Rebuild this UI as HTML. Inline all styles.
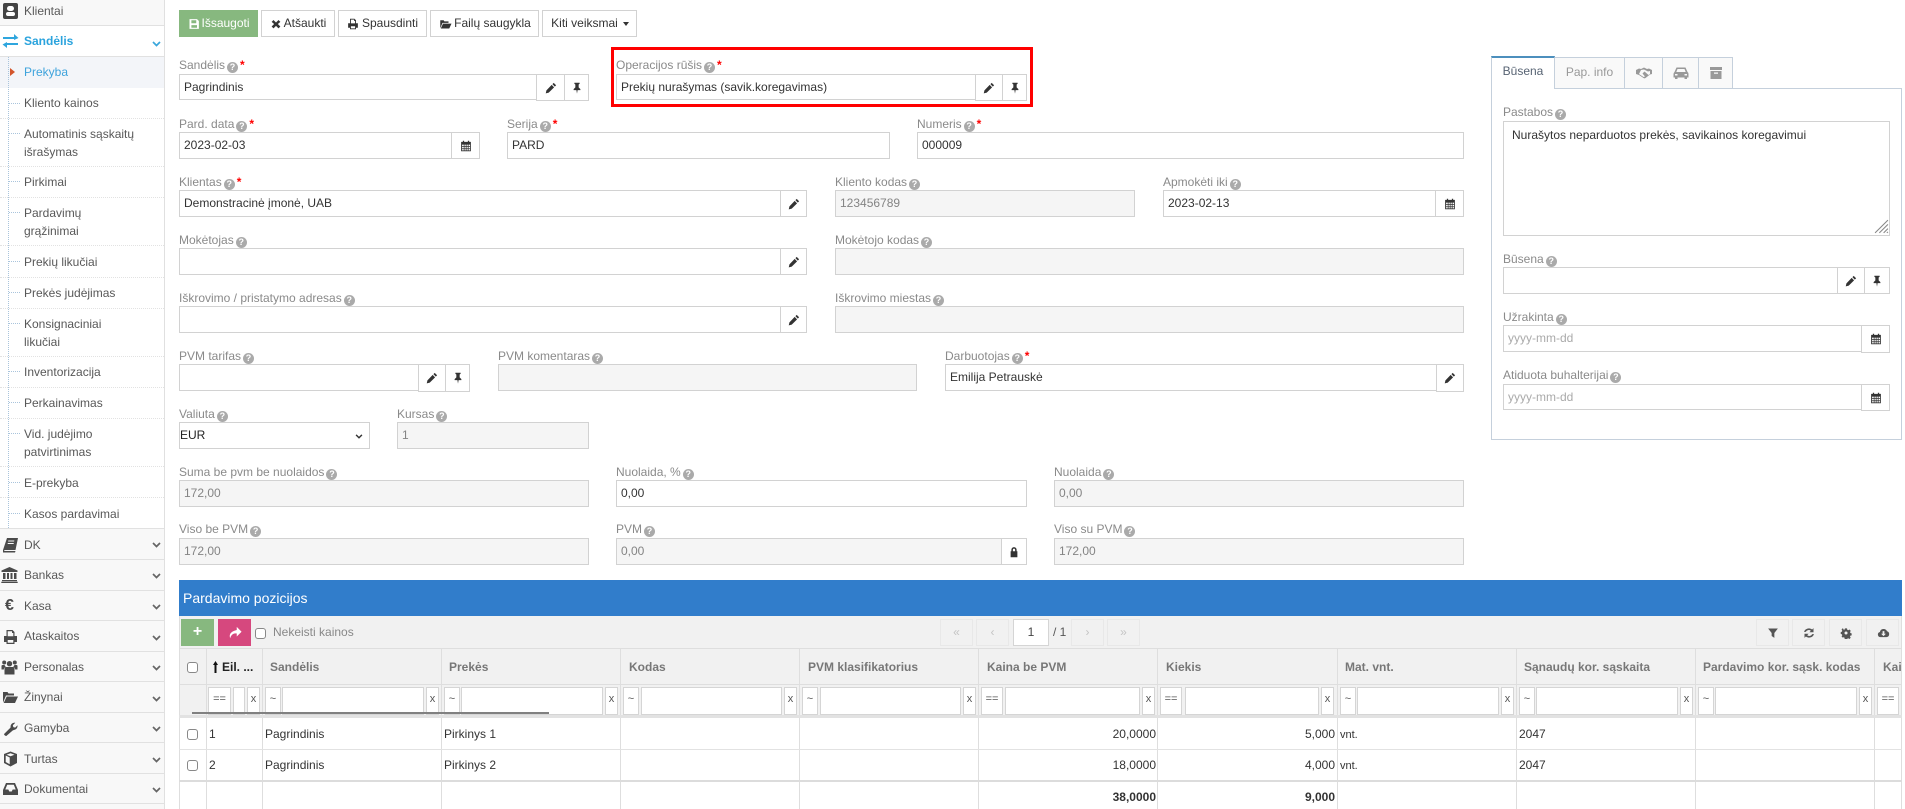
<!DOCTYPE html>
<html lang="lt"><head><meta charset="utf-8"><title>Pardavimas</title>
<style>
html,body{margin:0;padding:0;background:#fff}
body{position:relative;width:1905px;height:809px;overflow:hidden;font:12px/14px "Liberation Sans",sans-serif;color:#393939}
div,span,svg{position:absolute;box-sizing:border-box}
svg{fill:currentColor;display:block}
.n{left:0;width:164px;background:#f8f8f8;border-bottom:1px solid #e1e1e1;color:#585858}
.t{left:24px;white-space:nowrap;color:#585858}
.s{left:24px;white-space:nowrap;color:#585858;line-height:18px}
.d{left:0;width:164px;border-bottom:1px dotted #e2e2e2;height:1px}
.st{left:9px;width:11px;height:1px;border-top:1px dotted #a9c4dc}
.ch{left:152px;width:9px;height:6px;color:#666}
.ic{left:2px;width:17px;height:16px;color:#4a4a4a}
.l{white-space:nowrap;color:#8a8a8a;height:14px}
.q{position:static;display:inline-block;width:11px;height:11px;margin-left:2px;border-radius:50%;background:#aaa;color:#fff;font:bold 9px/11px "Liberation Sans",sans-serif;text-align:center;vertical-align:-1px}
.r{position:static;color:#f00;font-weight:bold;margin-left:2px;font-size:12px}
.i{border:1px solid #d2d2d2;background:#fff;height:27px;line-height:24px;padding-left:4px;color:#333;white-space:nowrap}
.g{background:#f5f5f5;color:#848484}
.b{border:1px solid #d2d2d2;background:#fff;height:28px;color:#333}
.b svg{left:50%;top:50%;width:12px;height:12px;margin:-6px 0 0 -6px}
.tb{top:10px;height:27px;border:1px solid #d2d2d2;background:#fff;color:#333;line-height:25px;white-space:nowrap;text-align:center}
.tb svg{width:12px;height:12px;top:7px}
.v{top:648px;bottom:0;width:1px;background:#dedede}
.h{top:660px;font-weight:bold;color:#777;white-space:nowrap}
.f{top:687px;height:28px;border:1px solid #d5d5d5;background:#fff;color:#555;font-size:11px;line-height:23px;text-align:center}
.c{width:11px;height:11px;border:1px solid #888;border-radius:3px;background:#fff;left:187px}
.x{white-space:nowrap;color:#333}
.rt{text-align:right;color:#333}
.p{top:619px;height:27px;border:1px solid #e8e8e8;width:33px;text-align:center;line-height:24px;color:#c4c4c4;background:#f1f1f1}
.tab{top:57px;height:31px;border:1px solid #c5d0dc;border-bottom:0;background:#f9f9f9;color:#999;text-align:center;line-height:28px;margin-right:0}
.tab svg{left:50%;top:8px;margin-left:-8px;width:16px;height:14px;color:#999}
</style></head><body>
<svg width="0" height="0" style="position:absolute"><defs>
<symbol id="pen" viewBox="0 0 16 16"><path d="M11.600 1.200l3.200 3.200-1.700 1.700-3.200-3.200zM8.900 3.900l3.200 3.200-7.100 7.100-4 1 .9-4.100z"/></symbol>
<symbol id="pin" viewBox="0 0 16 16"><path d="M4.500 1h7v1.300l-1.300 1v3.900l2.300 2.300v1.300H8.800L8 15.500l-.8-4.700H3.500V9.500l2.300-2.300V3.300l-1.300-1z"/></symbol>
<symbol id="cal" viewBox="0 0 16 16"><path fill-rule="evenodd" d="M1.500 2.500h2.300V1h1.700v1.500h5V1h1.700v1.500h2.300V15h-13zM2.800 6.200v2h2.200v-2zm3.200 0v2h1.700v-2zm2.700 0v2h1.700v-2zm2.700 0v2h2v-2zM2.800 9.200v2h2.200v-2zm3.200 0v2h1.700v-2zm2.700 0v2h1.700v-2zm2.700 0v2h2v-2zM2.800 12.200v1.700h2.200v-1.700zm3.200 0v1.700h1.700v-1.700zm2.700 0v1.700h1.700v-1.700zm2.700 0v1.700h2v-1.700z"/></symbol>
<symbol id="lock" viewBox="0 0 16 16"><path fill-rule="evenodd" d="M4.500 7V5a3.500 3.500 0 0 1 7 0v2h1v8h-9V7zm2 0h3V5a1.500 1.500 0 0 0-3 0z"/></symbol>
<symbol id="print" viewBox="0 0 16 16"><path fill-rule="evenodd" d="M4 1h6l2 2v4h2.500v6H12v2H4v-2H1.500V7H4zm1.200 1.200v5h5.600V4H9.500V2.200zM5.200 11v2.800h5.600V11z"/></symbol>
<symbol id="folder" viewBox="0 0 16 16"><path d="M1 13.500V3h4.500l1 1.500H12v2H4L1.300 13zM4.700 7.500H16L13 14H1.700z"/></symbol>
<symbol id="chev" viewBox="0 0 9 6"><path d="M1 1l3.500 3.500L8 1" fill="none" stroke="currentColor" stroke-width="1.700"/></symbol>
</defs></svg>

<!-- sidebar -->
<div style="left:164px;top:0;width:1px;height:809px;background:#e0e0e0"></div>
<div class="n" style="top:0;height:26px"></div>
<div style="left:0;top:26px;width:164px;height:31px;background:#fff;border-bottom:1px solid #e1e1e1"></div>
<div class="ic" style="top:3px;left:3px;height:16px;width:15px;background:#444;border-radius:2px"></div>
<div style="left:7px;top:6px;width:7px;height:5px;background:#fff;border-radius:3px"></div>
<div style="left:6px;top:12px;width:9px;height:4px;background:#fff;border-radius:2px"></div>
<div class="t" style="top:4px">Klientai</div>
<svg class="ic" viewBox="0 0 17 16" style="top:33px;color:#2fa6de"><path d="M1 4h11V1l4.500 4L12 7V6H1zM16 10H5V9L.5 11.500 5 15v-3h11z"/></svg>
<div class="t" style="top:34px;color:#2aa3dd;font-weight:bold">Sandėlis</div>
<svg class="ch" style="top:41px;color:#3aa7dc"><use href="#chev"/></svg>
<div style="left:0;top:57px;width:164px;height:31px;background:#f3f5f9"></div>
<div style="left:8px;top:57px;width:1px;height:752px;max-height:471px;border-left:1px dotted #a9c4dc"></div>
<div style="left:10px;top:68px;border-left:5px solid #d3552b;border-top:4px solid transparent;border-bottom:4px solid transparent"></div>
<div class="t" style="top:65px;color:#3ea3dc">Prekyba</div>
<div class="st" style="top:103px"></div><div class="t" style="top:96px">Kliento kainos</div><div class="d" style="top:118px"></div>
<div class="st" style="top:133px"></div><div class="s" style="top:125px;">Automatinis sąskaitų<br>išrašymas</div><div class="d" style="top:166px"></div>
<div class="st" style="top:181px"></div><div class="t" style="top:175px">Pirkimai</div><div class="d" style="top:197px"></div>
<div class="st" style="top:212px"></div><div class="s" style="top:204px">Pardavimų<br>grąžinimai</div><div class="d" style="top:245px"></div>
<div class="st" style="top:261px"></div><div class="t" style="top:255px">Prekių likučiai</div><div class="d" style="top:277px"></div>
<div class="st" style="top:292px"></div><div class="t" style="top:286px">Prekės judėjimas</div><div class="d" style="top:308px"></div>
<div class="st" style="top:323px"></div><div class="s" style="top:315px">Konsignaciniai<br>likučiai</div><div class="d" style="top:356px"></div>
<div class="st" style="top:371px"></div><div class="t" style="top:365px">Inventorizacija</div><div class="d" style="top:387px"></div>
<div class="st" style="top:402px"></div><div class="t" style="top:396px">Perkainavimas</div><div class="d" style="top:418px"></div>
<div class="st" style="top:433px"></div><div class="s" style="top:425px">Vid. judėjimo<br>patvirtinimas</div><div class="d" style="top:466px"></div>
<div class="st" style="top:482px"></div><div class="t" style="top:476px">E-prekyba</div><div class="d" style="top:497px"></div>
<div class="st" style="top:513px"></div><div class="t" style="top:507px">Kasos pardavimai</div>

<div class="n" style="top:528px;height:32px;border-top:1px solid #e1e1e1"></div>
<div class="n" style="top:560px;height:31px"></div>
<div class="n" style="top:591px;height:30px"></div>
<div class="n" style="top:621px;height:31px"></div>
<div class="n" style="top:652px;height:30px"></div>
<div class="n" style="top:682px;height:31px"></div>
<div class="n" style="top:713px;height:30px"></div>
<div class="n" style="top:743px;height:31px"></div>
<div class="n" style="top:774px;height:30px"></div>
<div style="left:0;top:804px;width:164px;height:5px;background:#f8f8f8"></div>

<svg class="ic" viewBox="0 0 17 16" style="top:537px"><path fill-rule="evenodd" d="M5 1h11l-2.500 12H3.500q-1.500 0-1.500 1h11.500L13 15.500H1V13zM6.300 3.500l-.2 1h6l.2-1zM5.800 6l-.2 1h6l.2-1z"/></svg>
<div class="t" style="top:538px">DK</div>
<svg class="ic" viewBox="0 0 17 16" style="top:567px;left:1px"><path d="M8.500 0L16.500 3.500V5H.5V3.500zM2 6h2.500v6H2zM6 6h2v6H6zM9.500 6h2v6h-2zM13 6h2.500v6H13zM1 13h15v1.300H1zM.3 14.800h16.400V16H.3z"/></svg>
<div class="t" style="top:568px">Bankas</div>
<span style="left:5px;top:597px;font:bold 16px/18px 'Liberation Sans',sans-serif;color:#4a4a4a">€</span>
<div class="t" style="top:599px">Kasa</div>
<svg class="ic" viewBox="0 0 16 16" style="top:629px"><use href="#print"/></svg>
<div class="t" style="top:629px">Ataskaitos</div>
<svg class="ic" viewBox="0 0 17 16" style="top:659px;left:1px"><path d="M8.500 2a2.700 2.700 0 1 1 0 5.400 2.700 2.700 0 0 1 0-5.400zM3.200 1.500a2 2 0 1 1 0 4 2 2 0 0 1 0-4zM13.800 1.500a2 2 0 1 1 0 4 2 2 0 0 1 0-4zM5 8h7q1.500 0 1.500 2v5.500h-10V10q0-2 1.500-2zM.5 7q0-1 1-1h2q.5 1 1.200 1.700Q3 8.500 2.800 10.500H.5zM16.500 7q0-1-1-1h-2q-.5 1-1.200 1.700 1.700.8 1.900 2.800h2.300z"/></svg>
<div class="t" style="top:660px">Personalas</div>
<svg class="ic" viewBox="0 0 16 16" style="top:689px;left:1px;width:18px"><use href="#folder"/></svg>
<div class="t" style="top:690px">Žinynai</div>
<svg class="ic" viewBox="0 0 16 16" style="top:721px;left:3px;width:15px"><path d="M1 13.500L8 6.500Q7.500 2 12 1.200l1 .3-2.500 2.500.5 2 2 .5L15.500 4q.5 4.500-5 5.500L3.500 15.500q-1.500 0-2.500-2z"/></svg>
<div class="t" style="top:721px">Gamyba</div>
<svg class="ic" viewBox="0 0 16 16" style="top:751px;left:2px"><path fill-rule="evenodd" d="M8 0.500l6.500 2.500v9L8 15.500 1.500 12V3zM3.200 4.500v6.500l4 2.200V6.500zM8 2.200L4 3.700 8 5.300l4-1.600z"/></svg>
<div class="t" style="top:752px">Turtas</div>
<svg class="ic" viewBox="0 0 16 16" style="top:781px"><path fill-rule="evenodd" d="M3.500 2h9L15.500 9v5H.5V9zM4.700 3.700L2.800 8.500h3l1 2h2.400l1-2h3l-1.900-4.800z"/></svg>
<div class="t" style="top:782px">Dokumentai</div>

<svg class="ch" style="top:542px"><use href="#chev"/></svg>
<svg class="ch" style="top:573px"><use href="#chev"/></svg>
<svg class="ch" style="top:604px"><use href="#chev"/></svg>
<svg class="ch" style="top:635px"><use href="#chev"/></svg>
<svg class="ch" style="top:665px"><use href="#chev"/></svg>
<svg class="ch" style="top:696px"><use href="#chev"/></svg>
<svg class="ch" style="top:726px"><use href="#chev"/></svg>
<svg class="ch" style="top:757px"><use href="#chev"/></svg>
<svg class="ch" style="top:787px"><use href="#chev"/></svg>

<!-- top buttons -->
<div class="tb" style="left:179px;width:79px;background:#87b87f;border-color:#87b87f;color:#fff;padding-left:14px">Išsaugoti
<svg viewBox="0 0 16 16" style="left:8px;color:#fff"><path fill-rule="evenodd" d="M2 1.500h10l2.500 2.500v10.500H2zM4.500 3v4h6.500V3zM4.500 9.500v3.500h7.500V9.500z"/></svg></div>
<div class="tb" style="left:261px;width:74px;padding-left:14px">Atšaukti
<svg viewBox="0 0 16 16" style="left:9px;width:10px;height:10px;top:8px"><path d="M4 1.500L8 5.500l4-4L15 4.500l-4 3.500 4 4-3 3-4-4-4 4-3-3 4-4-4-3.500z"/></svg></div>
<div class="tb" style="left:338px;width:89px;padding-left:15px">Spausdinti
<svg viewBox="0 0 16 16" style="left:8px"><use href="#print"/></svg></div>
<div class="tb" style="left:430px;width:109px;padding-left:16px">Failų saugykla
<svg viewBox="0 0 16 16" style="left:8px;width:13px"><use href="#folder"/></svg></div>
<div class="tb" style="left:542px;width:95px;padding-right:10px">Kiti veiksmai
<div style="left:80px;top:11px;border-top:4px solid #333;border-left:3px solid transparent;border-right:3px solid transparent"></div></div>

<!-- row 1 -->
<div class="l" style="left:179px;top:58px">Sandėlis<i class="q">?</i><b class="r">*</b></div>
<div class="i" style="left:179px;top:74px;width:358px;height:26px">Pagrindinis</div>
<div class="b" style="left:536px;top:74px;width:29px;height:27px"><svg><use href="#pen"/></svg></div>
<div class="b" style="left:564px;top:74px;width:25px;height:27px"><svg><use href="#pin"/></svg></div>

<div style="left:611px;top:47px;width:422px;height:60px;border:3px solid #f00"></div>
<div class="l" style="left:616px;top:58px">Operacijos rūšis<i class="q">?</i><b class="r">*</b></div>
<div class="i" style="left:616px;top:74px;width:360px;height:26px">Prekių nurašymas (savik.koregavimas)</div>
<div class="b" style="left:975px;top:74px;width:28px;height:27px"><svg><use href="#pen"/></svg></div>
<div class="b" style="left:1002px;top:74px;width:25px;height:27px"><svg><use href="#pin"/></svg></div>

<!-- row 2 -->
<div class="l" style="left:179px;top:117px">Pard. data<i class="q">?</i><b class="r">*</b></div>
<div class="i" style="left:179px;top:132px;width:273px">2023-02-03</div>
<div class="b" style="left:451px;top:132px;width:29px;height:27px"><svg><use href="#cal"/></svg></div>
<div class="l" style="left:507px;top:117px">Serija<i class="q">?</i><b class="r">*</b></div>
<div class="i" style="left:507px;top:132px;width:383px">PARD</div>
<div class="l" style="left:917px;top:117px">Numeris<i class="q">?</i><b class="r">*</b></div>
<div class="i" style="left:917px;top:132px;width:547px">000009</div>

<!-- row 3 -->
<div class="l" style="left:179px;top:175px">Klientas<i class="q">?</i><b class="r">*</b></div>
<div class="i" style="left:179px;top:190px;width:602px">Demonstracinė įmonė, UAB</div>
<div class="b" style="left:780px;top:190px;width:27px;height:27px"><svg><use href="#pen"/></svg></div>
<div class="l" style="left:835px;top:175px">Kliento kodas<i class="q">?</i></div>
<div class="i g" style="left:835px;top:190px;width:300px">123456789</div>
<div class="l" style="left:1163px;top:175px">Apmokėti iki<i class="q">?</i></div>
<div class="i" style="left:1163px;top:190px;width:273px">2023-02-13</div>
<div class="b" style="left:1435px;top:190px;width:29px;height:27px"><svg><use href="#cal"/></svg></div>

<!-- row 4 -->
<div class="l" style="left:179px;top:233px">Mokėtojas<i class="q">?</i></div>
<div class="i" style="left:179px;top:248px;width:602px"></div>
<div class="b" style="left:780px;top:248px;width:27px;height:27px"><svg><use href="#pen"/></svg></div>
<div class="l" style="left:835px;top:233px">Mokėtojo kodas<i class="q">?</i></div>
<div class="i g" style="left:835px;top:248px;width:629px"></div>

<!-- row 5 -->
<div class="l" style="left:179px;top:291px">Iškrovimo / pristatymo adresas<i class="q">?</i></div>
<div class="i" style="left:179px;top:306px;width:602px"></div>
<div class="b" style="left:780px;top:306px;width:27px;height:27px"><svg><use href="#pen"/></svg></div>
<div class="l" style="left:835px;top:291px">Iškrovimo miestas<i class="q">?</i></div>
<div class="i g" style="left:835px;top:306px;width:629px"></div>

<!-- row 6 -->
<div class="l" style="left:179px;top:349px">PVM tarifas<i class="q">?</i></div>
<div class="i" style="left:179px;top:364px;width:240px"></div>
<div class="b" style="left:418px;top:364px;width:28px"><svg><use href="#pen"/></svg></div>
<div class="b" style="left:445px;top:364px;width:25px"><svg><use href="#pin"/></svg></div>
<div class="l" style="left:498px;top:349px">PVM komentaras<i class="q">?</i></div>
<div class="i g" style="left:498px;top:364px;width:419px"></div>
<div class="l" style="left:945px;top:349px">Darbuotojas<i class="q">?</i><b class="r">*</b></div>
<div class="i" style="left:945px;top:364px;width:492px">Emilija Petrauskė</div>
<div class="b" style="left:1436px;top:364px;width:28px"><svg><use href="#pen"/></svg></div>

<!-- row 7 -->
<div class="l" style="left:179px;top:407px">Valiuta<i class="q">?</i></div>
<div class="i" style="left:179px;top:422px;width:191px;padding-left:0;color:#222">EUR
<svg viewBox="0 0 9 6" style="left:175px;top:11px;width:8px;height:5px;color:#333"><use href="#chev"/></svg></div>
<div class="l" style="left:397px;top:407px">Kursas<i class="q">?</i></div>
<div class="i g" style="left:397px;top:422px;width:192px">1</div>

<!-- row 8 -->
<div class="l" style="left:179px;top:465px">Suma be pvm be nuolaidos<i class="q">?</i></div>
<div class="i g" style="left:179px;top:480px;width:410px">172,00</div>
<div class="l" style="left:616px;top:465px">Nuolaida, %<i class="q">?</i></div>
<div class="i" style="left:616px;top:480px;width:411px">0,00</div>
<div class="l" style="left:1054px;top:465px">Nuolaida<i class="q">?</i></div>
<div class="i g" style="left:1054px;top:480px;width:410px">0,00</div>

<!-- row 9 -->
<div class="l" style="left:179px;top:522px">Viso be PVM<i class="q">?</i></div>
<div class="i g" style="left:179px;top:538px;width:410px">172,00</div>
<div class="l" style="left:616px;top:522px">PVM<i class="q">?</i></div>
<div class="i g" style="left:616px;top:538px;width:386px">0,00</div>
<div class="b" style="left:1001px;top:538px;width:26px;height:27px"><svg><use href="#lock"/></svg></div>
<div class="l" style="left:1054px;top:522px">Viso su PVM<i class="q">?</i></div>
<div class="i g" style="left:1054px;top:538px;width:410px">172,00</div>

<!-- right panel -->
<div style="left:1491px;top:88px;width:411px;height:352px;border:1px solid #c5d0dc"></div>
<div class="tab" style="left:1491px;top:56px;width:64px;height:33px;background:#fff;color:#576373;border-top:2px solid #4c8fbd;border-color:#4c8fbd #c5d0dc #fff;line-height:27px;z-index:2">Būsena</div>
<div class="tab" style="left:1554px;width:71px">Pap. info</div>
<div class="tab" style="left:1624px;width:39px"><svg viewBox="0 0 16 14"><path d="M0 4l3-1.500 2 .5 3-1.500 3 1.500 2-.5L16 4v4l-2 .5-4.500 3.500q-1 .8-2 0L3 9 0 8zM5 4L3 8l4.500 3 1.500-.5L6.500 7.500 8.500 5.500l4 3.500 1.500-1V5l-2 .5-4-2z"/></svg></div>
<div class="tab" style="left:1662px;width:37px"><svg viewBox="0 0 16 14"><path fill-rule="evenodd" d="M3.500 1.500h9L14.500 6q1 .5 1 2v3.500H14V13h-2.500v-1.500h-7V13H2v-1.500H.5V8q0-1 1-2zM4.500 3L3.300 6h9.400l-1.200-3zM2 8v1.500h2.500V8zm9.500 0v1.500H14V8z"/></svg></div>
<div class="tab" style="left:1698px;width:35px"><svg viewBox="0 0 16 14"><path fill-rule="evenodd" d="M2 1h12v3H2zM2.500 5h11v8h-11zM6 6.500v1.300h4V6.500z"/></svg></div>

<div class="l" style="left:1503px;top:105px">Pastabos<i class="q">?</i></div>
<div class="i" style="left:1503px;top:121px;width:387px;height:115px;padding-left:8px;line-height:26px">Nurašytos neparduotos prekės, savikainos koregavimui</div>
<svg viewBox="0 0 14 14" style="left:1874px;top:219px;width:15px;height:15px;fill:none;stroke:#888"><path d="M1 13L13 1M5 13L13 5M9 13l4-4M12 13l1-1"/></svg>
<div class="l" style="left:1503px;top:252px">Būsena<i class="q">?</i></div>
<div class="i" style="left:1503px;top:267px;width:335px"></div>
<div class="b" style="left:1837px;top:267px;width:28px;height:27px"><svg><use href="#pen"/></svg></div>
<div class="b" style="left:1864px;top:267px;width:26px;height:27px"><svg><use href="#pin"/></svg></div>
<div class="l" style="left:1503px;top:310px">Užrakinta<i class="q">?</i></div>
<div class="i" style="left:1503px;top:325px;width:359px;color:#aaa">yyyy-mm-dd</div>
<div class="b" style="left:1861px;top:325px;width:29px"><svg><use href="#cal"/></svg></div>
<div class="l" style="left:1503px;top:368px">Atiduota buhalterijai<i class="q">?</i></div>
<div class="i" style="left:1503px;top:384px;width:359px;height:26px;color:#aaa">yyyy-mm-dd</div>
<div class="b" style="left:1861px;top:384px;width:29px;height:27px"><svg><use href="#cal"/></svg></div>

<!-- table panel -->
<div style="left:179px;top:580px;width:1723px;height:36px;background:#317dcb;color:#fff;font-size:14px;line-height:36px;padding-left:4px">Pardavimo pozicijos</div>
<div style="left:179px;top:616px;width:1723px;height:100px;background:#f1f1f1"></div>
<div style="left:179px;top:616px;width:1px;height:193px;background:#dedede"></div>
<div style="left:1901px;top:616px;width:1px;height:193px;background:#dedede"></div>
<div style="left:181px;top:619px;width:33px;height:27px;background:#87b87f;color:#fff;font:bold 16px/26px 'Liberation Sans',sans-serif;text-align:center">+</div>
<div style="left:218px;top:619px;width:33px;height:27px;background:#d6487e"><svg viewBox="0 0 16 16" style="left:10px;top:7px;width:14px;height:14px;color:#fff"><path d="M10 1l5.500 5.500L10 12V8.500Q4 8 2.500 14 0 7 10 4.500z"/></svg></div>
<div class="c" style="left:255px;top:628px"></div>
<div class="x" style="left:273px;top:625px;color:#888">Nekeisti kainos</div>

<div class="p" style="left:940px">«</div>
<div class="p" style="left:976px">‹</div>
<div style="left:1013px;top:619px;width:36px;height:27px;border:1px solid #d5d5d5;background:#fff;text-align:center;line-height:25px;color:#444">1</div>
<div class="x" style="left:1053px;top:625px;color:#555">/ 1</div>
<div class="p" style="left:1071px">›</div>
<div class="p" style="left:1107px">»</div>

<div class="p" style="left:1756px;color:#555"><svg viewBox="0 0 16 16" style="left:10px;top:7px;width:12px;height:12px"><path d="M1.500 2h13L9.800 8v6.500L6.200 12V8z"/></svg></div>
<div class="p" style="left:1792px;color:#555"><svg viewBox="0 0 16 16" style="left:10px;top:7px;width:12px;height:12px"><path d="M14 1.500V7H8.500l2-2A4.500 4.500 0 0 0 3.700 6.500H1.300A7 7 0 0 1 12.200 3.300zM2 14.500V9h5.500l-2 2a4.500 4.500 0 0 0 6.800-1.500h2.400A7 7 0 0 1 3.800 12.700z"/></svg></div>
<div class="p" style="left:1829px;color:#555"><svg viewBox="0 0 16 16" style="left:10px;top:7px;width:12px;height:12px"><path fill-rule="evenodd" d="M6.500 1h3l.4 2 1.500.7 1.800-1.100 2 2.100-1.100 1.800.5 1.500 1.900.5v3l-1.900.4-.6 1.500 1.100 1.700-2 2-1.800-1.100-1.500.6-.4 1.900h-3l-.4-1.900L5 14l-1.800 1.100-2-2L2.300 11.400l-.6-1.500L0 9.500v-3l1.700-.5.600-1.500L1.200 2.700l2-2.100L5 3.700zM8 5.700a2.300 2.300 0 1 0 0 4.600 2.300 2.300 0 0 0 0-4.600z" transform="translate(1 1) scale(.88)"/></svg></div>
<div class="p" style="left:1866px;color:#555"><svg viewBox="0 0 16 16" style="left:10px;top:7px;width:13px;height:12px"><path fill-rule="evenodd" d="M4 13.500A3.500 3.500 0 0 1 3.200 6.600 5 5 0 0 1 12.700 5.700 4 4 0 0 1 12 13.500zM6.800 5.500v3.500H4.800L8 12.200 11.200 9H9.200V5.500z"/></svg></div>

<!-- table lines -->
<div style="left:179px;top:648px;width:1723px;height:1px;background:#dedede"></div>
<div style="left:179px;top:684px;width:1723px;height:1px;background:#dedede"></div>
<div class="v" style="left:206px"></div><div class="v" style="left:262px"></div><div class="v" style="left:441px"></div><div class="v" style="left:620px"></div><div class="v" style="left:799px"></div><div class="v" style="left:978px"></div><div class="v" style="left:1157px"></div><div class="v" style="left:1337px"></div><div class="v" style="left:1516px"></div><div class="v" style="left:1695px"></div><div class="v" style="left:1874px"></div>

<!-- header -->
<div class="c" style="top:662px"></div>
<svg viewBox="0 0 5 12" style="left:213px;top:661px;width:5px;height:12px;color:#111"><path d="M2.500 0L5 4H3.500v8h-2V4H0z"/></svg>
<div class="h" style="left:222px;color:#222">Eil. ...</div>
<div class="h" style="left:270px">Sandėlis</div>
<div class="h" style="left:449px">Prekės</div>
<div class="h" style="left:629px">Kodas</div>
<div class="h" style="left:808px">PVM klasifikatorius</div>
<div class="h" style="left:987px">Kaina be PVM</div>
<div class="h" style="left:1166px">Kiekis</div>
<div class="h" style="left:1345px">Mat. vnt.</div>
<div class="h" style="left:1524px">Sąnaudų kor. sąskaita</div>
<div class="h" style="left:1703px">Pardavimo kor. sąsk. kodas</div>
<div class="h" style="left:1883px;width:19px;overflow:hidden">Kai</div>

<!-- filters -->
<div class="f" style="left:208px;width:23px">==</div><div class="f" style="left:233px;width:12px"></div><div class="f" style="left:247px;width:13px">x</div>
<div class="f" style="left:265px;width:16px">~</div><div class="f" style="left:282px;width:142px"></div><div class="f" style="left:426px;width:13px">x</div>
<div class="f" style="left:444px;width:16px">~</div><div class="f" style="left:461px;width:142px"></div><div class="f" style="left:605px;width:13px">x</div>
<div class="f" style="left:623px;width:16px">~</div><div class="f" style="left:641px;width:141px"></div><div class="f" style="left:784px;width:13px">x</div>
<div class="f" style="left:802px;width:16px">~</div><div class="f" style="left:820px;width:141px"></div><div class="f" style="left:963px;width:13px">x</div>
<div class="f" style="left:981px;width:22px">==</div><div class="f" style="left:1005px;width:135px"></div><div class="f" style="left:1142px;width:13px">x</div>
<div class="f" style="left:1160px;width:22px">==</div><div class="f" style="left:1185px;width:134px"></div><div class="f" style="left:1321px;width:13px">x</div>
<div class="f" style="left:1340px;width:16px">~</div><div class="f" style="left:1357px;width:142px"></div><div class="f" style="left:1501px;width:13px">x</div>
<div class="f" style="left:1519px;width:16px">~</div><div class="f" style="left:1536px;width:142px"></div><div class="f" style="left:1680px;width:13px">x</div>
<div class="f" style="left:1698px;width:16px">~</div><div class="f" style="left:1715px;width:142px"></div><div class="f" style="left:1859px;width:13px">x</div>
<div class="f" style="left:1877px;width:22px">==</div>
<div style="left:192px;top:712px;width:357px;height:2px;background:#808080"></div>
<div style="left:179px;top:715px;width:1723px;height:3px;background:#e2e2e2"></div>

<!-- rows -->
<div style="left:179px;top:749px;width:1723px;height:1px;background:#e2e2e2"></div>
<div style="left:179px;top:780px;width:1723px;height:2px;background:#dcdcdc"></div>
<div class="c" style="top:729px"></div><div class="c" style="top:760px"></div>
<div class="x" style="left:209px;top:727px">1</div><div class="x" style="left:209px;top:758px">2</div>
<div class="x" style="left:265px;top:727px">Pagrindinis</div><div class="x" style="left:265px;top:758px">Pagrindinis</div>
<div class="x" style="left:444px;top:727px">Pirkinys 1</div><div class="x" style="left:444px;top:758px">Pirkinys 2</div>
<div class="rt" style="left:1056px;top:727px;width:100px">20,0000</div><div class="rt" style="left:1056px;top:758px;width:100px">18,0000</div>
<div class="rt" style="left:1235px;top:727px;width:100px">5,000</div><div class="rt" style="left:1235px;top:758px;width:100px">4,000</div>
<div class="x" style="left:1340px;top:728px;font-size:11px">vnt.</div><div class="x" style="left:1340px;top:759px;font-size:11px">vnt.</div>
<div class="x" style="left:1519px;top:727px">2047</div><div class="x" style="left:1519px;top:758px">2047</div>
<div class="rt" style="left:1056px;top:790px;width:100px;font-weight:bold">38,0000</div>
<div class="rt" style="left:1235px;top:790px;width:100px;font-weight:bold">9,000</div>
</body></html>
